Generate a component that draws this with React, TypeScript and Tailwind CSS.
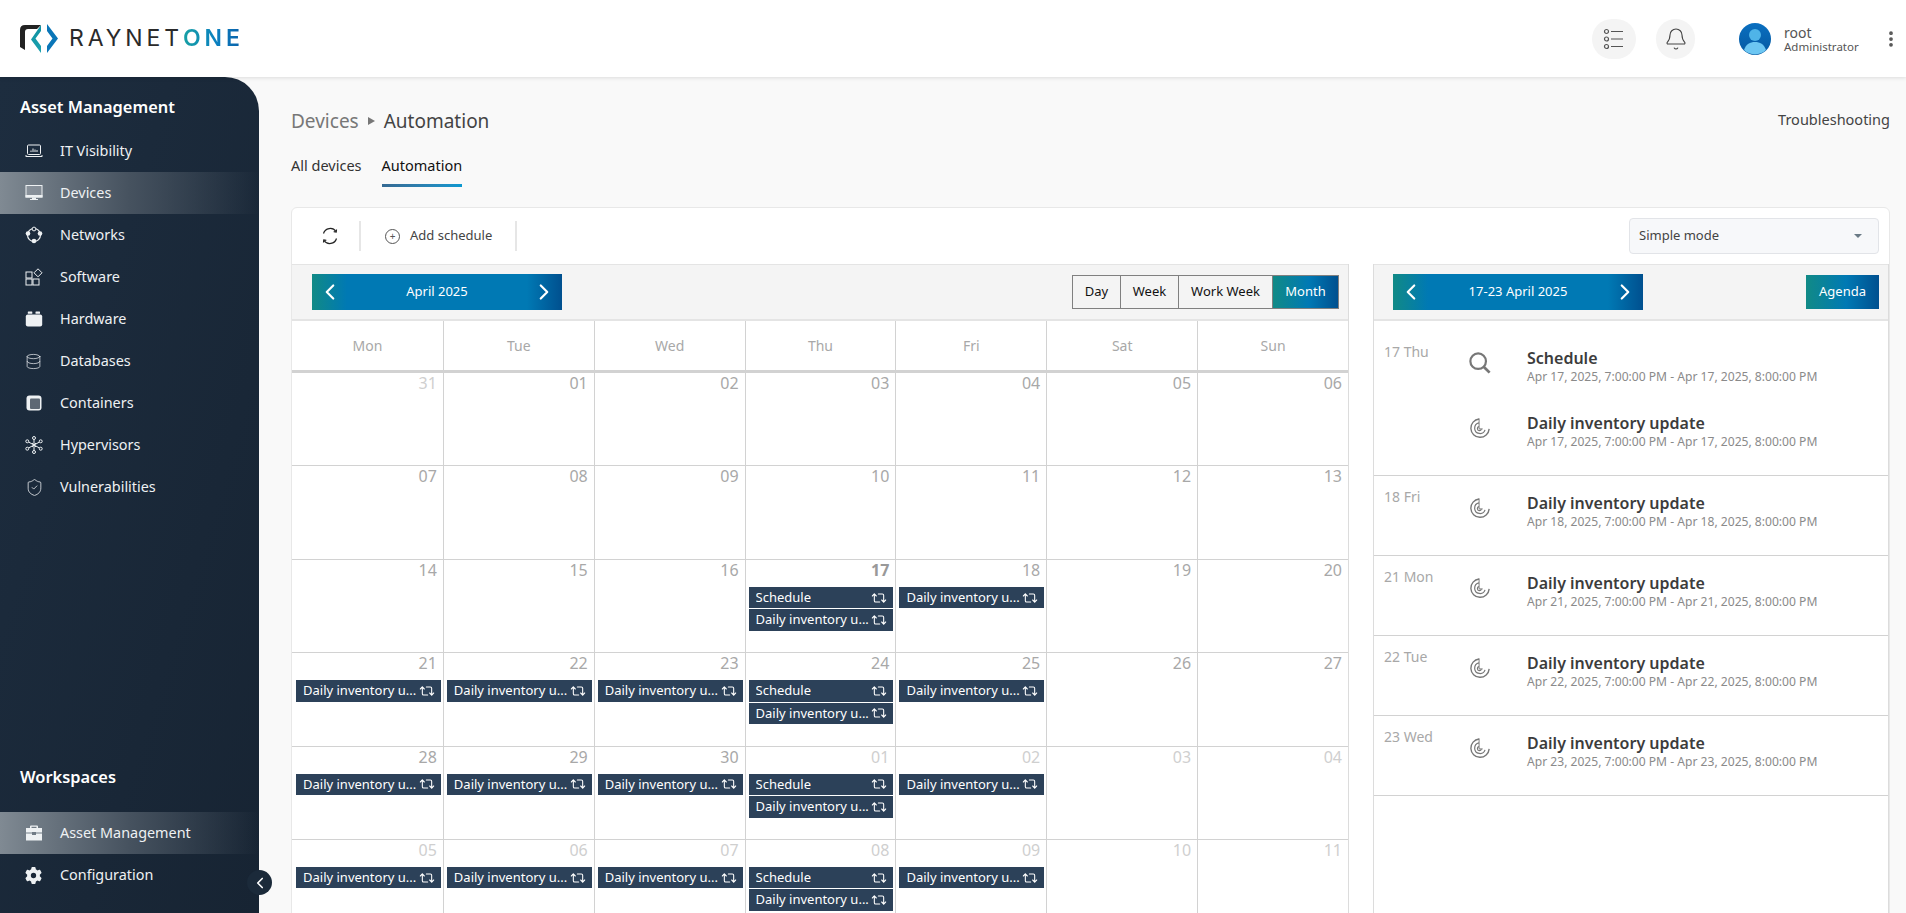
import { ChevronLeft, ChevronRight, Database, ShieldCheck, EllipsisVertical, Bell, Repeat2 } from "lucide-react";
import { FaGear } from "react-icons/fa6";

const Laptop = () => (
  <svg width="18" height="18" viewBox="0 0 18 18" fill="none" stroke="currentColor" strokeWidth="1">
    <rect x="2.5" y="3" width="13" height="9.5" rx="1" />
    <path d="M.8 14.5h16.4M6 10V8.5M8 10V6.5M10 10V7.5M12 10V8" />
    <path d="M1 13v1.5M17 13v1.5" />
  </svg>
);
const Monitor = () => (
  <svg width="18" height="18" viewBox="0 0 18 18" fill="currentColor">
    <rect x="1" y="1.500" width="16" height="11.500" fill="currentColor" fillOpacity=".18" stroke="currentColor" strokeWidth="1" />
    <rect x=".5" y="11" width="17" height="2.500" />
    <rect x="7" y="13.500" width="4" height="1.500" />
    <rect x="5" y="15" width="8" height="1" />
  </svg>
);
const NetworkNodes = () => (
  <svg width="18" height="18" viewBox="0 0 18 18" fill="currentColor">
    <circle cx="9" cy="9" r="6.500" fill="none" stroke="currentColor" strokeWidth="1.200" />
    <circle cx="9" cy="3" r="1.900" fill="#1c2b3c" stroke="currentColor" />
    <circle cx="3" cy="7.500" r="2.300" />
    <circle cx="15" cy="7.500" r="2.300" />
    <circle cx="9" cy="15" r="2.300" />
  </svg>
);
const Software = () => (
  <svg width="18" height="18" viewBox="0 0 18 18" fill="none" stroke="currentColor" strokeWidth="1">
    <rect x="1" y="4" width="6" height="6" />
    <rect x="1" y="11" width="6" height="6" />
    <rect x="8" y="11" width="6" height="6" />
    <path d="m13 .8 4 4-4 4-4-4Z" />
  </svg>
);
const Hardware = () => (
  <svg width="18" height="18" viewBox="0 0 18 18" fill="currentColor">
    <rect x=".8" y="4.500" width="16.400" height="12" rx="2" />
    <rect x="2.800" y="1.500" width="4.500" height="2.200" rx=".5" />
    <rect x="10.500" y="1.500" width="4.500" height="2.200" rx=".5" />
  </svg>
);
const Container = () => (
  <svg width="18" height="18" viewBox="0 0 18 18">
    <rect x="1.500" y="1.500" width="15" height="15" rx="3" fill="currentColor" />
    <rect x="5" y="4.500" width="10" height="10.500" rx="1" fill="#5d6874" />
  </svg>
);
const Hypervisor = () => (
  <svg width="18" height="18" viewBox="0 0 18 18" fill="none" stroke="currentColor" strokeWidth="1">
    <path d="M9 3.500v11M3.500 6l11 6M14.500 6l-11 6" />
    <path d="m7 7 2 1.800L11 7M7 11l2-1.800L11 11" />
    <circle cx="9" cy="2" r="1.500" />
    <circle cx="9" cy="16" r="1.500" />
    <circle cx="2.300" cy="5.300" r="1.500" />
    <circle cx="15.700" cy="5.300" r="1.500" />
    <circle cx="2.300" cy="12.700" r="1.500" />
    <circle cx="15.700" cy="12.700" r="1.500" />
  </svg>
);
const Briefcase = () => (
  <svg width="18" height="18" viewBox="0 0 18 18" fill="currentColor">
    <path d="M6 1.500h6a1 1 0 0 1 1 1V4h4v4.500H11V8H7v.5H1V4h4V2.500a1 1 0 0 1 1-1Zm.500 1.200V4h5V2.700Z" />
    <path d="M1 9.500h6v1.500h4V9.500h6V16.500H1Z" />
  </svg>
);
const Radar = () => (
  <svg width="22" height="22" viewBox="0 0 24 24" fill="none" stroke="#777" strokeWidth="1.500">
    <path d="M11 2.200A10 10 0 1 0 22 13" />
    <path d="M11 6.500A5.800 5.800 0 1 0 17.500 14" strokeWidth="1.300" />
    <path d="M11 10.500A2.200 2.200 0 1 0 13.500 13" strokeWidth="1.200" />
    <path d="M11 1.500V13h4" strokeWidth="1" />
    <path d="M16 5v.01M19 8v.01M20 11v.01M15 9v.01" strokeDasharray="1 1" strokeWidth="1.300" />
  </svg>
);
const SearchIcon = () => (
  <svg width="22" height="22" viewBox="0 0 24 24" fill="none" stroke="#777" strokeWidth="2.400">
    <circle cx="10" cy="10" r="8.500" />
    <path d="m16 16 6.500 6.500" strokeWidth="3" />
  </svg>
);
const Logo = () => (
  <svg width="39" height="30" viewBox="0 0 39 30">
    <defs>
      <linearGradient id="teal" x1="0" y1="0" x2="0" y2="1">
        <stop offset="0" stopColor="#0f8fa0" />
        <stop offset="1" stopColor="#1ba3b0" />
      </linearGradient>
    </defs>
    <path d="M0 6q0-5 5-5h16l-4 4H8Q5 5 5 8v18l-5-3Z" fill="#222" />
    <path d="M21 1v6l-5.500 7.500L21 22v7L11 15.500Z" fill="url(#teal)" />
    <path d="M27 0 38 14.500 27 29v-7l5.500-7.500L27 7Z" fill="#0a76b8" />
  </svg>
);
const Avatar = () => (
  <svg width="32" height="32" viewBox="0 0 32 32">
    <defs>
      <linearGradient id="av" x1="0" y1="0" x2="0" y2="1">
        <stop offset="0" stopColor="#0a6fc0" />
        <stop offset="1" stopColor="#0558a0" />
      </linearGradient>
    </defs>
    <circle cx="16" cy="16" r="16" fill="url(#av)" />
    <circle cx="16" cy="12" r="6" fill="#4fb4e8" />
    <path d="M5 27c2-6 6-8 11-8s9 2 11 8a16 16 0 0 1-22 0Z" fill="#6cc6f2" />
  </svg>
);
const ListIcon = () => (
  <svg width="22" height="22" viewBox="0 0 22 22" fill="none" stroke="#555" strokeWidth="1.200">
    <circle cx="3.500" cy="3.500" r="2" />
    <circle cx="3.500" cy="11" r="2" />
    <circle cx="3.500" cy="18.500" r="2" />
    <path d="M8 3.500h12M8 11h12M8 18.500h12" />
  </svg>
);
const RefreshIcon = () => (
  <svg width="18" height="18" viewBox="0 0 18 18" fill="none" stroke="#222" strokeWidth="1.200">
    <path d="M2.500 6.500A7 7 0 0 1 15 4.500" />
    <path d="M15.500 11.500A7 7 0 0 1 3 13.500" />
    <path d="m15.500 2.500-.3 2.500-2.500-.3M2.500 15.500l.3-2.500 2.500.3" />
    <path d="M1.700 9v.01M16.300 9v.01" strokeWidth="1.500" />
  </svg>
);

const nav = [
  { label: "IT Visibility", icon: <Laptop /> },
  { label: "Devices", icon: <Monitor />, active: true },
  { label: "Networks", icon: <NetworkNodes /> },
  { label: "Software", icon: <Software /> },
  { label: "Hardware", icon: <Hardware /> },
  { label: "Databases", icon: <Database size={17} strokeWidth={1} /> },
  { label: "Containers", icon: <Container /> },
  { label: "Hypervisors", icon: <Hypervisor /> },
  { label: "Vulnerabilities", icon: <ShieldCheck size={19} strokeWidth={1} /> },
];

function NavItem({ label, icon, active }: { label: string; icon: any; active?: boolean }) {
  return (
    <div
      className={
        "flex h-[42px] items-center pl-[25px] text-[14.400px] text-[#eef1f3] " +
        (active ? "bg-gradient-to-r from-[#808a93] via-[#46525f] to-transparent" : "")
      }
    >
      <span className="flex w-[35px] shrink-0">{icon}</span>
      {label}
    </div>
  );
}

function Sidebar() {
  return (
    <aside className="relative flex h-full w-[259px] shrink-0 flex-col rounded-tr-[34px] bg-gradient-to-br from-[#1d2d3f] to-[#172433]">
      <div className="flex h-[60px] items-center pl-[20px] text-[16.400px] font-semibold text-white">Asset Management</div>
      <div className="-mt-[7px] flex flex-col">
        {nav.map((item) => (
          <NavItem key={item.label} {...item} />
        ))}
      </div>
      <div className="mt-auto mb-[17px]">
        <div className="flex h-[50px] items-center pl-[20px] text-[16.400px] font-semibold text-white">Workspaces</div>
        <div className="mt-[10px]">
          <NavItem label="Asset Management" icon={<Briefcase />} active />
          <NavItem label="Configuration" icon={<FaGear size={17} />} />
        </div>
      </div>
      <button className="absolute bottom-[18px] -right-[13px] flex h-[25px] w-[25px] items-center justify-center rounded-full bg-[#1b2a3a] text-white">
        <ChevronLeft size={18} strokeWidth={2.2} />
      </button>
    </aside>
  );
}

const S = "Schedule";
const D = "Daily inventory u...";
type Cell = { n: string; muted?: boolean; today?: boolean; ev?: string[] };
const weeks: Cell[][] = [
  [{ n: "31", muted: true }, { n: "01" }, { n: "02" }, { n: "03" }, { n: "04" }, { n: "05" }, { n: "06" }],
  [{ n: "07" }, { n: "08" }, { n: "09" }, { n: "10" }, { n: "11" }, { n: "12" }, { n: "13" }],
  [{ n: "14" }, { n: "15" }, { n: "16" }, { n: "17", today: true, ev: [S, D] }, { n: "18", ev: [D] }, { n: "19" }, { n: "20" }],
  [{ n: "21", ev: [D] }, { n: "22", ev: [D] }, { n: "23", ev: [D] }, { n: "24", ev: [S, D] }, { n: "25", ev: [D] }, { n: "26" }, { n: "27" }],
  [
    { n: "28", ev: [D] },
    { n: "29", ev: [D] },
    { n: "30", ev: [D] },
    { n: "01", muted: true, ev: [S, D] },
    { n: "02", muted: true, ev: [D] },
    { n: "03", muted: true },
    { n: "04", muted: true },
  ],
  [
    { n: "05", muted: true, ev: [D] },
    { n: "06", muted: true, ev: [D] },
    { n: "07", muted: true, ev: [D] },
    { n: "08", muted: true, ev: [S, D] },
    { n: "09", muted: true, ev: [D] },
    { n: "10", muted: true },
    { n: "11", muted: true },
  ],
];

function DateBar({ label }: { label: string }) {
  return (
    <div className="flex h-[36px] w-[250px] items-center justify-between bg-[linear-gradient(to_right,#118a86,#0079b4_14%,#0079b4_86%,#00508f)] px-[5px] text-[13px] text-white">
      <ChevronLeft size={26} strokeWidth={2} />
      {label}
      <ChevronRight size={26} strokeWidth={2} />
    </div>
  );
}

function MonthView() {
  return (
    <div className="w-[1057px] shrink-0 border-r border-[#dcdcdc]">
      <div className="flex h-[57px] items-center justify-between border-t border-b-2 border-[#e4e4e4] bg-[#f4f4f4] pl-[20px] pr-[9px]">
        <DateBar label="April 2025" />
        <div className="flex h-[34px] border border-[#808080] text-[13px] text-[#111]">
          <span className="flex w-[48px] items-center justify-center border-r border-[#808080]">Day</span>
          <span className="flex w-[58px] items-center justify-center border-r border-[#808080]">Week</span>
          <span className="flex w-[94px] items-center justify-center border-r border-[#808080]">Work Week</span>
          <span className="flex w-[65px] items-center justify-center bg-[linear-gradient(to_right,#118a86,#0079b4_55%,#00508f)] text-white">Month</span>
        </div>
      </div>
      <div className="grid grid-cols-7 border-b-[3px] border-[#d2d2d2]">
        {["Mon", "Tue", "Wed", "Thu", "Fri", "Sat", "Sun"].map((d, i) => (
          <div key={d} className={"flex h-[49px] items-center justify-center text-[14px] text-[#a8a8a8] " + (i ? "border-l border-[#d2d2d2]" : "")}>
            {d}
          </div>
        ))}
      </div>
      {weeks.map((week, w) => (
        <div key={w} className="grid h-[93.400px] grid-cols-7 border-b border-[#d2d2d2]">
          {week.map((c, i) => (
            <div key={i} className={"min-w-0 pr-[2px] " + (i ? "border-l border-[#d2d2d2] pl-[3px]" : "pl-[4px]")}>
              <div
                className={
                  "h-[25px] pr-[4px] text-right text-[16px] leading-[20px] " +
                  (c.today ? "font-bold text-[#999]" : c.muted ? "text-[#cfcfcf]" : "text-[#a8a8a8]")
                }
              >
                {c.n}
              </div>
              <div className="mt-[2px] flex flex-col gap-px">
                {c.ev?.map((e, k) => (
                  <div key={k} className="flex h-[21.500px] items-center justify-between bg-[#2c4159] pl-[7px] pr-[6px] text-[13px] text-white">
                    <span className="truncate">{e}</span>
                    <Repeat2 size={16} strokeWidth={1.600} className="shrink-0" />
                  </div>
                ))}
              </div>
            </div>
          ))}
        </div>
      ))}
    </div>
  );
}

const agenda = [
  { day: "17 Thu", first: true, items: [{ t: "Schedule", d: "17", search: true }, { t: "Daily inventory update", d: "17" }] },
  { day: "18 Fri", items: [{ t: "Daily inventory update", d: "18" }] },
  { day: "21 Mon", items: [{ t: "Daily inventory update", d: "21" }] },
  { day: "22 Tue", items: [{ t: "Daily inventory update", d: "22" }] },
  { day: "23 Wed", items: [{ t: "Daily inventory update", d: "23" }] },
];

function AgendaView() {
  return (
    <div className="ml-[24px] flex-1 border-l border-r border-[#dcdcdc]">
      <div className="flex h-[57px] items-center justify-between border-t border-b-2 border-[#e4e4e4] bg-[#f4f4f4] pl-[19px] pr-[9px]">
        <DateBar label="17-23 April 2025" />
        <div className="flex h-[34px] w-[73px] items-center justify-center bg-[linear-gradient(to_right,#118a86,#0079b4_55%,#00508f)] text-[13px] text-white">Agenda</div>
      </div>
      {agenda.map((g) => (
        <div key={g.day} className={"flex border-b border-[#d2d2d2] pb-[11px] " + (g.first ? "pt-[13px]" : "pt-[3px]")}>
          <div className="w-[93px] shrink-0 pl-[10px] pt-[8px] text-[14px] leading-[20px] text-[#a8a8a8]">{g.day}</div>
          <div className="flex flex-1 flex-col">
            {g.items.map((it) => (
              <div key={it.t} className="flex h-[65px] items-center">
                <span className="-mt-[7px] flex w-[60px] shrink-0 pl-[2px]">{it.search ? <SearchIcon /> : <Radar />}</span>
                <div>
                  <div className="text-[16px] font-semibold leading-[20px] text-[#3c3c3c]">{it.t}</div>
                  <div className="text-[12.100px] leading-[17px] text-[#8a8a8a]">
                    {`Apr ${it.d}, 2025, 7:00:00 PM - Apr ${it.d}, 2025, 8:00:00 PM`}
                  </div>
                </div>
              </div>
            ))}
          </div>
        </div>
      ))}
    </div>
  );
}

export default function App() {
  return (
    <div className="flex h-screen flex-col overflow-hidden bg-[#f9f9f9] font-['Noto_Sans','Liberation_Sans',sans-serif]">
      <header className="z-10 flex h-[77px] shrink-0 items-center bg-white pl-[20px] pr-[5px] shadow-[0_1px_4px_rgba(0,0,0,0.12)]">
        <Logo />
        <span className="ml-[10px] font-['Inter',sans-serif] text-[23px] tracking-[3.900px] text-[#2a2a2a]">
          RAYNET
          <span className="bg-[linear-gradient(to_right,#17a0a4,#0a80c0_55%,#0b5ea8)] bg-clip-text font-semibold text-transparent">ONE</span>
        </span>
        <div className="ml-auto flex items-center">
          <span className="flex h-[40px] w-[44px] items-center justify-center rounded-full bg-[#f4f4f4]">
            <ListIcon />
          </span>
          <span className="ml-[20px] flex h-[40px] w-[39px] items-center justify-center rounded-full bg-[#f4f4f4] text-[#444]">
            <Bell size={24} strokeWidth={1.100} />
          </span>
          <span className="ml-[44px] flex">
            <Avatar />
          </span>
          <div className="ml-[13px] flex w-[97px] flex-col">
            <span className="text-[14px] leading-[15px] text-[#555]">root</span>
            <span className="text-[11.500px] leading-[13px] text-[#555]">Administrator</span>
          </div>
          <EllipsisVertical size={20} strokeWidth={2.500} className="text-[#555]" />
        </div>
      </header>
      <div className="flex min-h-0 flex-1">
        <Sidebar />
        <main className="min-w-0 flex-1 pl-[32px] pr-[16px] pt-[30px]">
          <div className="flex h-[28px] items-center text-[19px] text-[#777]">
            Devices
            <span className="mx-[9px] h-0 w-0 border-y-[4.500px] border-l-[7px] border-y-transparent border-l-[#777]" />
            <span className="text-[#444]">Automation</span>
            <span className="-mt-[2px] ml-auto text-[14.500px] text-[#444]">Troubleshooting</span>
          </div>
          <div className="mt-[19px] flex text-[14.500px] text-[#333]">
            <span className="mr-[20px] h-[33px] pt-[1px]">All devices</span>
            <span className="relative h-[33px] pt-[1px] text-[#111]">
              Automation
              <span className="absolute inset-x-0 bottom-0 h-[3px] bg-gradient-to-r from-[#356a93] to-[#0a98d0]" />
            </span>
          </div>
          <div className="mt-[20px] rounded-t-[6px] border border-[#e8e8e8] bg-white">
            <div className="flex h-[56px] items-center">
              <span className="flex w-[67px] justify-center pl-[9px]">
                <RefreshIcon />
              </span>
              <span className="h-[30px] w-[2px] bg-[#e6e6e6]" />
              <span className="ml-[24px] flex h-[15px] w-[15px] items-center justify-center rounded-full border border-[#555] text-[10px] leading-none text-[#555]">+</span>
              <span className="ml-[10px] text-[13px] text-[#444]">Add schedule</span>
              <span className="ml-[23px] h-[30px] w-[2px] bg-[#e6e6e6]" />
              <div className="ml-auto mr-[10px] flex h-[36px] w-[250px] items-center justify-between rounded-[4px] border border-[#e2e4e8] bg-[#f7f8fa] pl-[9px] pr-[16px] text-[13px] text-[#444]">
                Simple mode
                <span className="h-0 w-0 border-x-[4px] border-t-[4px] border-x-transparent border-t-[#6a7a85]" />
              </div>
            </div>
            <div className="flex">
              <MonthView />
              <AgendaView />
            </div>
          </div>
        </main>
      </div>
    </div>
  );
}
